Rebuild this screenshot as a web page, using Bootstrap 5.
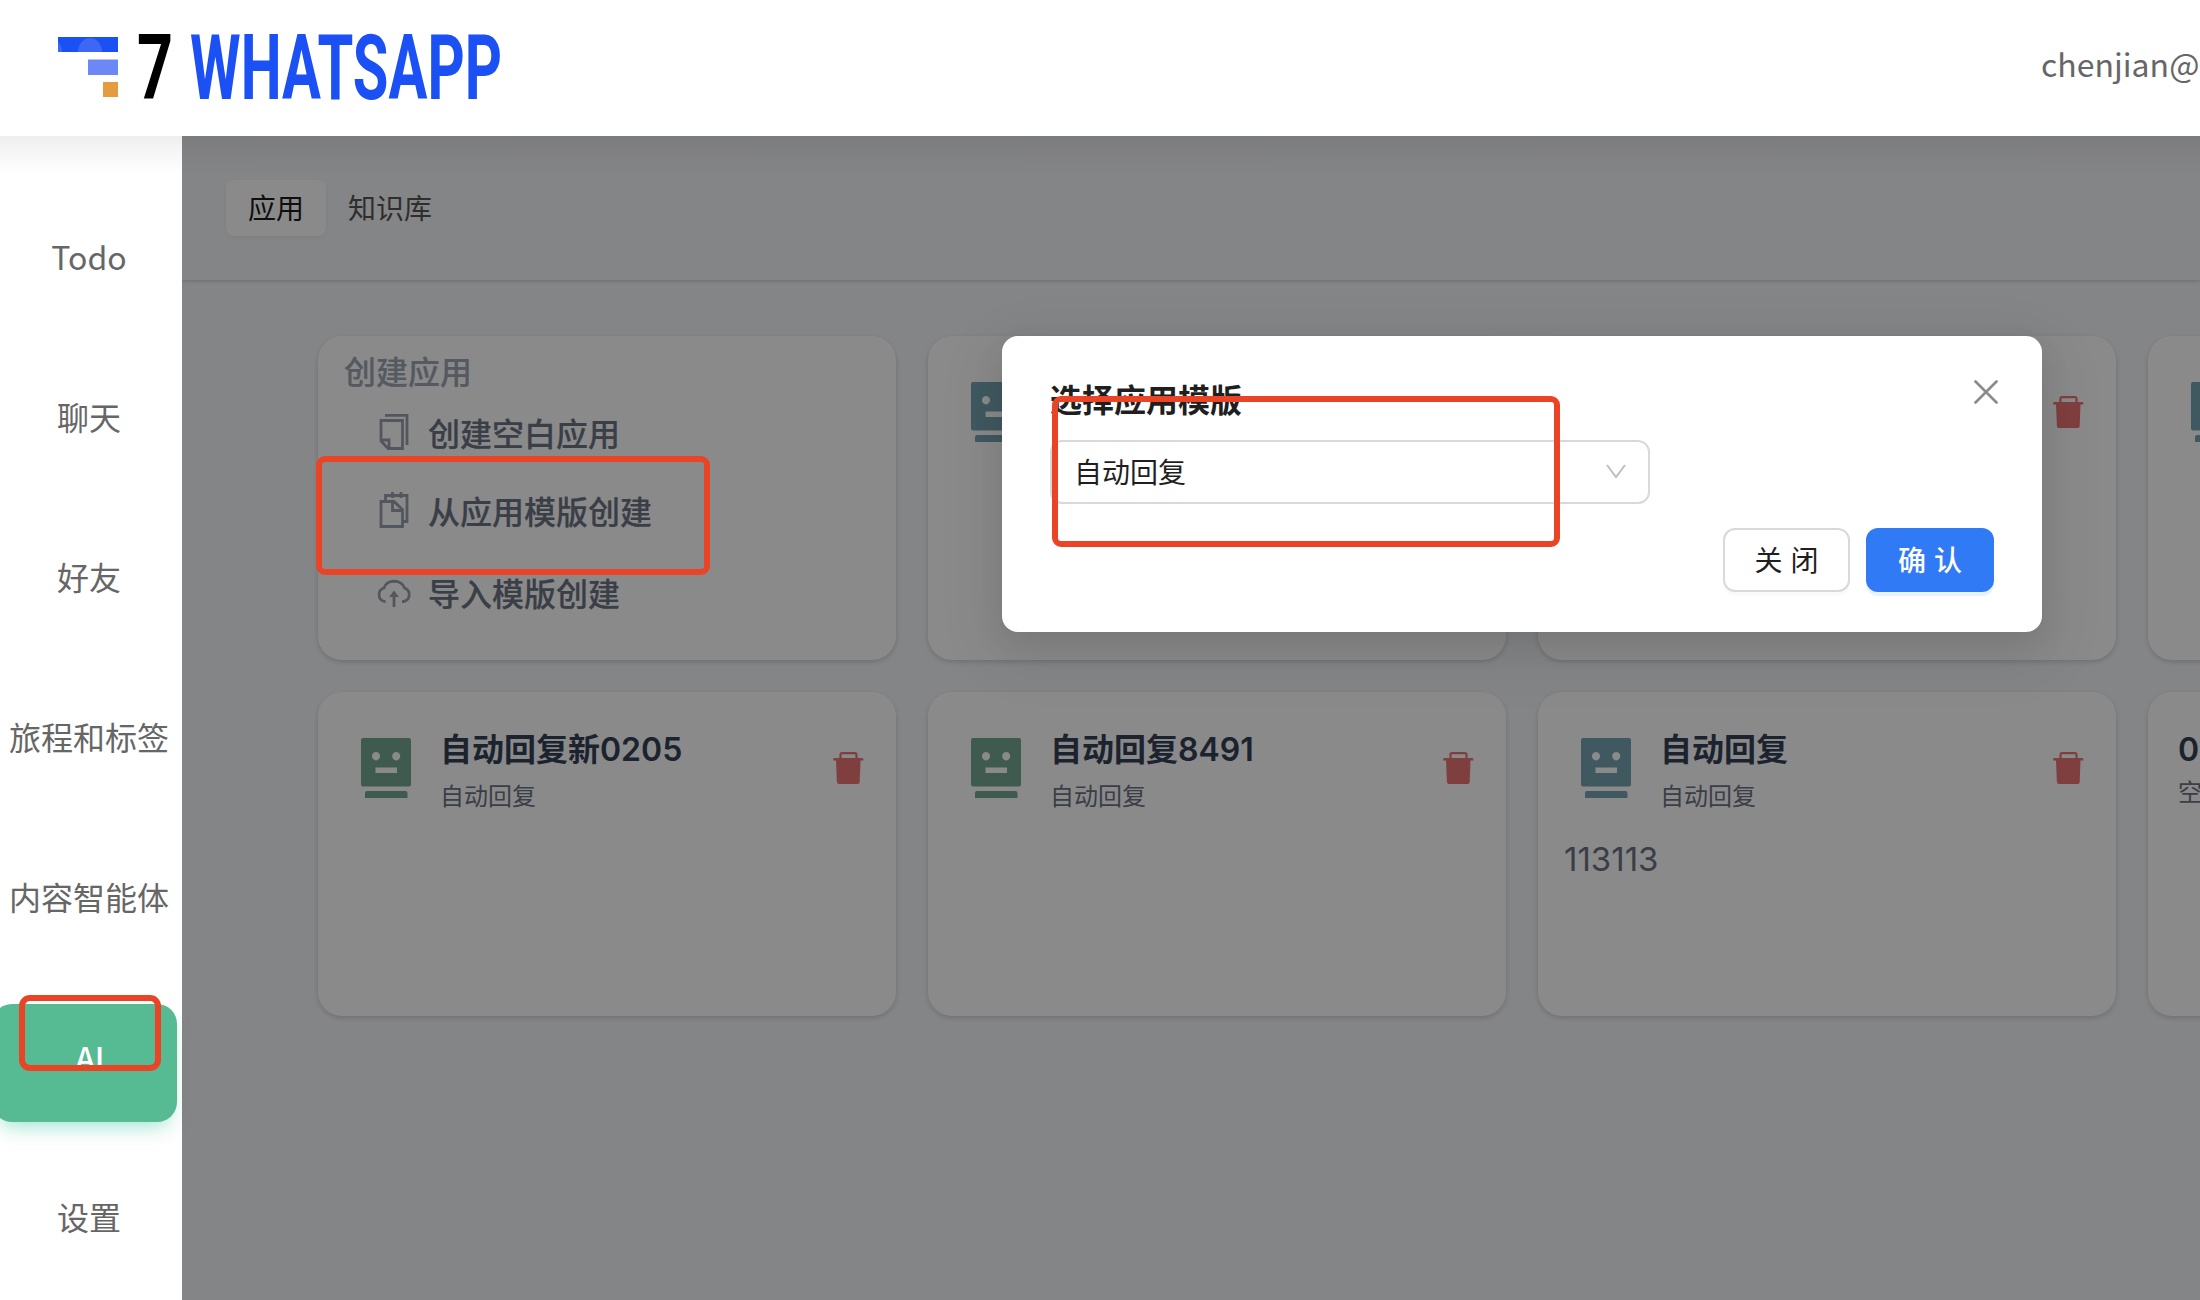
<!DOCTYPE html>
<html lang="zh-CN">
<head>
<meta charset="utf-8">
<title>7 WHATSAPP</title>
<link href="https://cdn.jsdelivr.net/npm/bootstrap@5.3.0/dist/css/bootstrap.min.css" rel="stylesheet">
<style>
  body { width: 2200px; height: 1300px; overflow: hidden; background: #fff; font-family: "Noto Sans CJK SC", sans-serif; font-size: 32px; line-height: 1; color: #666; }
  .topbar { height: 136px; padding-left: 58px; z-index: 1; }
  .account { width: 159px; white-space: nowrap; overflow: visible; margin-top: -10px; }
  .shell { height: 1164px; }
  .sidemenu { width: 182px; padding-top: 42px; z-index: 2; }
  .sidemenu::before, .workspace::before { content: ""; position: absolute; left: 0; right: 0; top: 0; height: 38px; background: linear-gradient(rgba(40,44,60,.08), rgba(40,44,60,0)); }
  .sidemenu a { width: 190px; height: 118px; margin: 0 0 42px -8px; padding: 0 0 14px 4px; border-radius: 20px; color: #666; text-decoration: none; flex: none; white-space: nowrap; }
  .sidemenu a:first-child { margin-top: 26px; }
  .sidemenu a.active { background: #56ba92; color: #fff; width: 185px; padding-left: 11px; box-shadow: 0 12px 20px -8px rgba(60,200,160,.5); font-size: 31px; font-weight: 500; }
  .workspace { background: #f1f2f5; overflow: hidden; }
  .tabbar { height: 144px; padding-left: 44px; box-shadow: 0 1px 4px rgba(0,21,41,.2); background: #f1f2f4; }
  .tabbar span { height: 56px; padding: 0 22px 3px; font-size: 28px; color: #555; border-radius: 8px; }
  .tabbar .current { background: #fcfcfc; color: #1c1c1c; box-shadow: 0 2px 4px rgba(0,0,0,.05); }
  .workspace::before { z-index: 1; }
  .appgrid { display: grid; grid-template-columns: repeat(4, 578px); grid-auto-rows: 324px; gap: 32px; padding: 56px 0 0 136px; }
  .appcard { background: #fcfcfd; border-radius: 24px; box-shadow: 0 2px 5px rgba(0,0,0,.16); }
  .createcard { padding: 16px 26px; font-weight: 500; -webkit-text-stroke: .2px currentColor; }
  .createcard h2 { font-size: 32px; font-weight: 500; line-height: 36px; color: #9ca3af; margin: 0; }
  .createcard li { height: 36px; color: #6b7280; gap: 15px; margin-left: 33px; }
  .createcard li svg { color: #979eaa; flex: none; }
  .apphead { padding: 37px 32px 0 43px; }
  .appname { font: 600 32px/40px Inter, "Noto Sans CJK SC", sans-serif; color: #334155; white-space: nowrap; padding-top: 1px; margin-bottom: -1px; }
  .apptype { font-size: 24px; line-height: 36px; color: #6b7280; margin-top: 8px; white-space: nowrap; }
  .appdesc { font: 33px/40px Inter, sans-serif; color: #6b7280; padding-left: 26px; margin-top: 26px; }
  .bot { margin: 9px 29px 0 0; flex: none; }
  .green { color: #73a591; } .teal { color: #76a2af; } .bin { color: #e77472; margin-top: 23px; flex: none; }
  .veil { position: absolute; inset: 0; background: rgba(0,0,0,.45); z-index: 2; }
  .dialogbox { position: absolute; z-index: 3; left: 820px; top: 200px; width: 1040px; height: 296px; background: #fff; border-radius: 16px; padding: 44px 48px 40px; box-shadow: 0 12px 32px rgba(0,0,0,.09), 0 18px 60px 16px rgba(0,0,0,.05); }
  .dialogbox h1 { font-size: 32px; line-height: 36px; font-weight: 700; color: #1f1f1f; margin: 0; }
  .picker { width: 600px; height: 64px; border: 2px solid #d9d9d9; border-radius: 12px; padding: 0 22px 3px 22px; font-size: 28px; color: #1f1f1f; margin-top: 24px; }
  .dialogbox .btn { height: 64px; width: 128px; border-radius: 12px; font-size: 28px; line-height: 1; letter-spacing: 8px; padding: 0 0 3px 8px; border-width: 2px; }
  .dialogbox .btn-close-dlg { width: 127px; background: #fff; border-color: #d9d9d9; color: #1f1f1f; box-shadow: 0 4px 0 rgba(0,0,0,.02); }
  .dialogbox .btn-ok { background: #307af6; border-color: #307af6; color: #fff; box-shadow: 0 4px 0 #e8f2ff; font-weight: 500; }
  .marker { position: absolute; border: 6px solid #ea4427; border-radius: 9px; z-index: 5; }
  .mark-ai { left: 19px; top: 995px; width: 142px; height: 76px; border-radius: 11px; }
  .mark-template { left: 316px; top: 456px; width: 394px; height: 119px; }
  .mark-select { left: 1052px; top: 396px; width: 508px; height: 151px; }
</style>
</head>
<body class="position-relative">
<svg class="d-none">
  <symbol id="bot" viewBox="0 0 50 60"><path fill="currentColor" fill-rule="evenodd" d="M2 0H48Q50 0 50 2V46.500Q50 48.500 48 48.500H2Q0 48.500 0 46.500V2Q0 0 2 0ZM15 14a4 4.200 0 1 0 .01 0ZM35.200 14a4 4.200 0 1 0 .01 0ZM14.500 29.500V35H36V29.500Z"/><path fill="currentColor" d="M4 60V55q0-2 2-2H44.500q2 0 2 2V60Z"/></symbol>
  <symbol id="bin" viewBox="0 0 31 32"><path fill="none" stroke="currentColor" stroke-width="2.200" d="M7.500 7V2.500Q7.500 1.100 9 1.100H22Q23.500 1.100 23.500 2.500V7"/><path fill="currentColor" d="M1 6H29.500Q30.500 6 30.500 8.500H27.500L26.700 30Q26.600 32 24.600 32H6Q4 32 3.900 30L3 8.500H0Q0 6 1 6Z"/></symbol>
</svg>

<header class="topbar position-relative bg-white d-flex align-items-center justify-content-between">
  <svg width="450" height="136" viewBox="58 0 450 136">
    <path fill="#1b50f5" d="M58 37h60v15H58z"/>
    <path fill="#3d67f5" d="M78 52a12 14 0 0 1 24 0ZM58 42q4 4 4 10h-4z"/>
    <path fill="#6c88f6" d="M88 59.500h30V75H88z"/>
    <path fill="#e59b40" d="M103 82h15v15h-15z"/>
    <text x="137" y="99" font-family="Roboto, sans-serif" font-size="91" font-weight="700" textLength="36" lengthAdjust="spacingAndGlyphs" fill="#000">7</text>
    <text x="190" y="99" font-family="Roboto, sans-serif" font-size="91" font-weight="700" textLength="312" lengthAdjust="spacingAndGlyphs" fill="#1b50f5">WHATSAPP</text>
  </svg>
  <div class="account">chenjian@c</div>
</header>

<div class="shell d-flex">
  <nav class="sidemenu position-relative d-flex flex-column bg-white flex-shrink-0">
    <a class="d-flex align-items-center justify-content-center" href="#">Todo</a>
    <a class="d-flex align-items-center justify-content-center" href="#">聊天</a>
    <a class="d-flex align-items-center justify-content-center" href="#">好友</a>
    <a class="d-flex align-items-center justify-content-center" href="#">旅程和标签</a>
    <a class="d-flex align-items-center justify-content-center" href="#">内容智能体</a>
    <a class="d-flex align-items-center justify-content-center active" href="#">AI</a>
    <a class="d-flex align-items-center justify-content-center" href="#">设置</a>
  </nav>

  <main class="workspace position-relative flex-grow-1">
    <div class="tabbar d-flex align-items-center">
      <span class="current d-flex align-items-center">应用</span>
      <span class="d-flex align-items-center">知识库</span>
    </div>
    <section class="appgrid">
      <article class="appcard createcard">
        <h2>创建应用</h2>
        <ul class="list-unstyled m-0">
          <li class="d-flex align-items-center" style="margin-top:26px"><svg width="36" height="36" fill="none" stroke="currentColor" stroke-width="2.800"><path d="M4 6.500H25.500V34.500H11L4 27ZM4 26H12V34M8 1.400H30V31"/></svg><span>创建空白应用</span></li>
          <li class="d-flex align-items-center" style="margin-top:42px"><svg width="36" height="36" fill="none" stroke="currentColor" stroke-width="2.800"><path d="M4 9.500H17L25.500 17.500V34.500H4ZM15.500 10V18.500H25M8.500 9V3.500H30V29.500H26M15.500 0V6M24 0V6"/></svg><span>从应用模版创建</span></li>
          <li class="d-flex align-items-center" style="margin-top:46px"><svg width="36" height="36" fill="none" stroke="currentColor" stroke-width="2.800"><path d="M8.500 27.500H7.500A7 7 0 0 1 7 14C9 5 25 5 27.500 14A7 7 0 0 1 26.500 27.500H25M17 33V21"/><path fill="currentColor" stroke="none" d="M17 16.500L22 23H12Z"/></svg><span>导入模版创建</span></li>
        </ul>
      </article>
      <article class="appcard">
        <div class="apphead d-flex"><svg class="bot teal" width="50" height="60"><use href="#bot"/></svg></div>
      </article>
      <article class="appcard">
        <div class="apphead d-flex justify-content-end"><svg class="bin" width="31" height="32"><use href="#bin"/></svg></div>
      </article>
      <article class="appcard">
        <div class="apphead d-flex"><svg class="bot teal" width="50" height="60"><use href="#bot"/></svg></div>
      </article>
      <article class="appcard">
        <div class="apphead d-flex"><svg class="bot green" width="50" height="60"><use href="#bot"/></svg>
          <div class="flex-grow-1"><div class="appname">自动回复新0205</div><div class="apptype">自动回复</div></div>
          <svg class="bin" width="31" height="32"><use href="#bin"/></svg></div>
      </article>
      <article class="appcard">
        <div class="apphead d-flex"><svg class="bot green" width="50" height="60"><use href="#bot"/></svg>
          <div class="flex-grow-1"><div class="appname">自动回复8491</div><div class="apptype">自动回复</div></div>
          <svg class="bin" width="31" height="32"><use href="#bin"/></svg></div>
      </article>
      <article class="appcard">
        <div class="apphead d-flex"><svg class="bot teal" width="50" height="60"><use href="#bot"/></svg>
          <div class="flex-grow-1"><div class="appname">自动回复</div><div class="apptype">自动回复</div></div>
          <svg class="bin" width="31" height="32"><use href="#bin"/></svg></div>
        <div class="appdesc">113113</div>
      </article>
      <article class="appcard">
        <div class="apphead" style="padding-left:30px"><div class="appname">0</div><div class="apptype mt-1">空</div></div>
      </article>
    </section>
    <div class="veil"></div>

    <div class="dialogbox d-flex flex-column" role="dialog">
      <div class="d-flex justify-content-between align-items-start">
        <h1>选择应用模版</h1>
        <svg width="24" height="24" style="margin-right:-4px" fill="none" stroke="#8a8a8a" stroke-width="2.600" stroke-linecap="round"><path d="M1.500 1.500l21 21M22.500 1.500l-21 21"/></svg>
      </div>
      <div class="picker d-flex align-items-center justify-content-between"><span>自动回复</span><svg width="20" height="16" fill="none" stroke="#bfbfbf" stroke-width="2"><path d="M1 2l9 12 9-12"/></svg></div>
      <div class="d-flex justify-content-end gap-3" style="margin-top:24px">
        <button class="btn btn-close-dlg">关闭</button>
        <button class="btn btn-ok">确认</button>
      </div>
    </div>
  </main>
</div>

<div class="marker mark-ai"></div>
<div class="marker mark-template"></div>
<div class="marker mark-select"></div>
<script src="https://cdn.jsdelivr.net/npm/bootstrap@5.3.0/dist/js/bootstrap.bundle.min.js"></script>
</body>
</html>
